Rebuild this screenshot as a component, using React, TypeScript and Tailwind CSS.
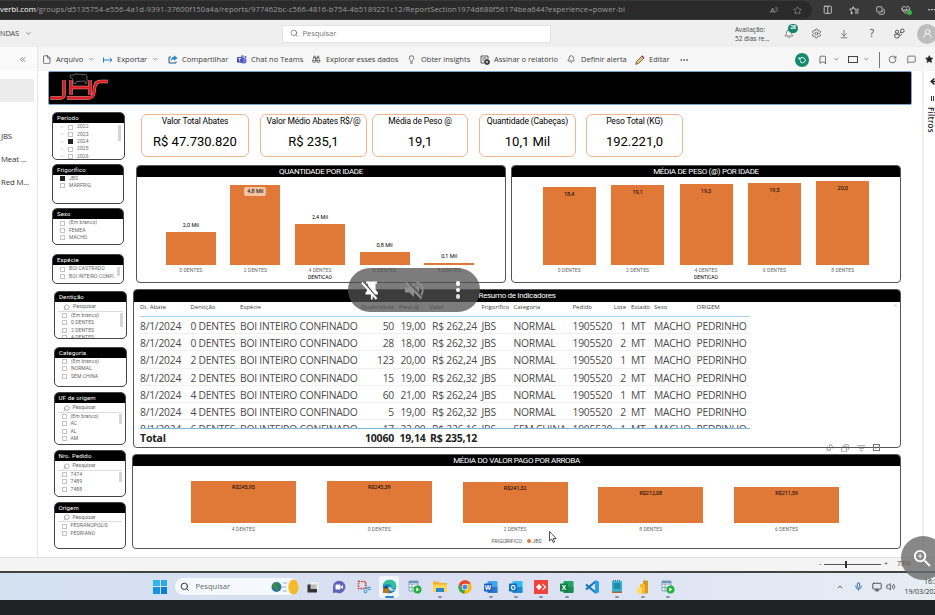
import type { ReactNode } from 'react'
import {
  ArrowDownToLine, Bell, Binoculars, Bookmark, Check, ChevronDown, ChevronUp, ChevronsLeft, Columns2, Copy, File,
  HeartPulse, Lightbulb, ListFilter, MessageSquare, Mic, Monitor, MoreHorizontal, Pin, RotateCw, Search, Settings,
  Star, UserRound, Volume2,
} from 'lucide-react'
import { MdZoomIn } from 'react-icons/md'

const din = "font-['Roboto',sans-serif]"
const segoe = "font-['Open_Sans',sans-serif]"

/* ---------- Browser and service bars ---------- */

function AddressBar() {
  return (
    <div className="flex h-[20px] shrink-0 items-center bg-[#383838]">
      <div className="flex h-[18px] w-[812px] shrink-0 items-center rounded-r-full bg-[#2a2a2a]">
        <span className="w-[761px] whitespace-nowrap text-[7.7px] tracking-[0.065px] text-[#9b9b9b]">
          <span className="text-white">verbi.com</span>
          /groups/d5135754-e556-4a1d-9391-37600f150a4a/reports/977462bc-c566-4816-b754-4b5189221c12/ReportSection1974d688f56174bea644?experience=power-bi
        </span>
        <span className="w-[32px] pl-[9px] text-[8px] leading-none text-[#a5a5a5]">A<sup className="text-[5px]">))</sup></span>
        <Star size={9} strokeWidth={1.6} color="#a5a5a5" />
      </div>
      <div className="flex items-center gap-[16.5px] pl-[11px] text-[#e0e0e0]">
        <Columns2 size={9.5} strokeWidth={2} />
        <svg width="10" height="9" viewBox="0 0 10 9" fill="none" stroke="#e0e0e0" strokeWidth="0.9">
          <path d="M4.2.8 5.2 3l2 .2M4.2.8 3.2 3 .7 3.3l1.8 1.8-.4 2.8 2-1.2M6 5h3.6M6 7h3.6M7.5 3.2h2.1" />
        </svg>
        <Copy size={9} strokeWidth={2} className="-scale-x-100 rotate-90" />
        <div className="relative">
          <HeartPulse size={9.5} strokeWidth={2} />
          <span className="absolute -right-[1px] bottom-0 size-[4.5px] rounded-full bg-[#35b54a]" />
        </div>
        <MoreHorizontal size={9.5} />
      </div>
    </div>
  )
}

function ServiceBar() {
  return (
    <div className="flex h-[27px] shrink-0 items-center bg-[#efefef] text-[#444]">
      <span className="w-[25px] shrink-0 text-[7.3px] tracking-[-0.1px]">NDAS</span>
      <ChevronDown size={7} strokeWidth={2} className="shrink-0" />
      <div className="ml-[250px] flex h-[18px] w-[269px] shrink-0 items-center border border-[#e2e2e2] bg-white pl-[7px]">
        <Search size={8.5} strokeWidth={1.7} className="text-[#555]" />
        <span className="pl-[4px] text-[7.6px] tracking-[-0.100px] text-[#777]">Pesquisar</span>
      </div>
      <div className="ml-[184px] w-[49px] shrink-0 text-[6.5px] leading-[9px]">
        <div>Avaliação:</div>
        <div>52 dias re...</div>
      </div>
      <div className="relative shrink-0">
        <Bell size={10} strokeWidth={1.6} />
        <span className="absolute -top-[5px] left-[4px] flex h-[9px] w-[10px] items-center justify-center rounded-full bg-[#12846b] text-[5px] font-bold text-white">28</span>
      </div>
      <Settings size={11} strokeWidth={1.5} className="ml-[17px] shrink-0" />
      <ArrowDownToLine size={10} strokeWidth={1.6} className="ml-[17px] shrink-0" />
      <span className="ml-[18px] w-[10px] shrink-0 text-center text-[10px]">?</span>
      <svg className="ml-[17px] shrink-0" width="11" height="11" viewBox="0 0 11 11" fill="none" stroke="#444" strokeWidth="0.9">
        <circle cx="3" cy="3.8" r="1.6" /><path d="M.6 6.3h4.6v1.5a2.3 2.3 0 0 1-4.6 0z" /><circle cx="8.3" cy="2.800" r="1.800" /><path d="M7 4 5.500 5.500M5.500 8 8 6" />
      </svg>
      <div className="ml-[12px] flex size-[20px] shrink-0 items-center justify-center rounded-full bg-[#bdbdbd]">
        <UserRound size={11} strokeWidth={1.8} color="#fff" />
      </div>
    </div>
  )
}

const chevron = <ChevronDown size={6.5} strokeWidth={2} />

function Action({ icon, label, width, menu }: { icon: ReactNode; label: string; width: string; menu?: boolean }) {
  return (
    <div className={'flex shrink-0 items-center ' + width}>
      <span className="flex w-[14px] shrink-0 items-center">{icon}</span>
      <span className="whitespace-nowrap">{label}</span>
      {menu && <span className="pl-[5px]">{chevron}</span>}
    </div>
  )
}

function Toolbar() {
  return (
    <div className="flex h-[24px] shrink-0 items-center bg-[#f6f6f6] pl-[4px] pt-px text-[7.5px] text-[#3c3c3c]">
      <Action width="w-[61px]" icon={<File size={9.5} strokeWidth={1.8} />} label="Arquivo" menu />
      <Action
        width="w-[65px]"
        icon={<svg width="10" height="8" viewBox="0 0 10 8" fill="none" stroke="#2f7fc4"><path d="M.5 1.5v5M1 4h8M6.8 2 9 4 6.8 6" /></svg>}
        label="Exportar"
        menu
      />
      <Action
        width="w-[69px]"
        icon={<svg width="10" height="9" viewBox="0 0 10 9"><path d="M3 2H1v6h7V6.500" fill="none" stroke="#245a86" /><path d="M6 .3 9.500 3 6 5.700V4.200Q4 4 2.500 6 3 2.200 6 2z" fill="#2787cf" /></svg>}
        label="Compartilhar"
      />
      <Action
        width="w-[75px]"
        icon={<svg width="10" height="9" viewBox="0 0 10 9"><circle cx="5.500" cy="1.500" r="1.500" fill="#7b83eb" /><circle cx="8.500" cy="2" r="1" fill="#5059c9" /><rect x="3.500" y="3" width="6" height="5.500" rx="2" fill="#6a72d8" /><rect y="2" width="5.500" height="5.500" rx=".5" fill="#4249ad" /><path d="M1.200 3.500h3M2.700 3.500v3" stroke="#fff" strokeWidth=".8" /></svg>}
        label="Chat no Teams"
      />
      <Action width="w-[95px] tracking-[-0.080px]" icon={<Binoculars size={8.5} strokeWidth={1.8} />} label="Explorar esses dados" />
      <Action width="w-[73px]" icon={<Lightbulb size={9} strokeWidth={1.9} />} label="Obter insights" />
      <Action
        width="w-[87px]"
        icon={<svg width="10" height="10" viewBox="0 0 10 10" fill="none" stroke="#333" strokeWidth=".8"><path d="M4 8H1V1h7v3M2.500 3h4M2.500 5h2" /><circle cx="7" cy="7" r="2.500" fill="#333" /><path d="M7 5.700v2.600M5.700 7h2.600" stroke="#fff" /></svg>}
        label="Assinar o relatório"
      />
      <Action width="w-[68px]" icon={<Bell size={8.5} strokeWidth={1.9} />} label="Definir alerta" />
      <Action
        width="w-[44px]"
        icon={<svg width="10" height="10" viewBox="0 0 10 10"><path d="M.7 9.300 1.500 6.500 7 1l2 2-5.500 5.500z" fill="#e5c46c" stroke="#5b5238" strokeWidth=".8" /><path d="m6.800.8 2.300 2.300" stroke="#7a3e72" strokeWidth="1.300" /></svg>}
        label="Editar"
      />
      <MoreHorizontal size={10} strokeWidth={1.7} className="shrink-0" />
      <div className="ml-[106px] flex size-[14px] shrink-0 items-center justify-center rounded-full bg-[#118a70]">
        <svg width="8" height="8" viewBox="0 0 8 8" fill="none" stroke="#fff" strokeWidth=".9"><path d="M1 1v2h2M1.200 3Q4-.2 6.500 2.500T4.500 7Q2.500 7 2.300 4.500" /></svg>
      </div>
      <Bookmark size={9.5} strokeWidth={1.8} className="ml-[9px] shrink-0" />
      <span className="ml-[5px]">{chevron}</span>
      <span className="ml-[9px] h-[7px] w-[10px] shrink-0 border border-[#444]" />
      <span className="ml-[5px]">{chevron}</span>
      <span className="ml-[9px] h-[16px] w-px shrink-0 bg-[#777]" />
      <RotateCw size={9} strokeWidth={1.8} className="ml-[8.5px] shrink-0" />
      <MessageSquare size={9} strokeWidth={1.8} className="ml-[9.500px] shrink-0" />
      <Star size={8.5} fill="#222" className="ml-[9.500px] shrink-0" />
    </div>
  )
}

function Sidebar() {
  return (
    <aside className="flex w-[38px] shrink-0 flex-col border-r border-[#e6e6e6] bg-white text-[7.8px] leading-[10px] text-[#333]">
      <div className="flex h-[24px] items-center justify-end bg-[#fafafa] pr-[10px]"><ChevronsLeft size={9} strokeWidth={1.7} /></div>
      <div className="mt-[8px] h-[23px] w-[34px] bg-[#ececec]" />
      <div className="mt-[29px] whitespace-nowrap pl-px tracking-[-0.200px]">JBS</div>
      <div className="mt-[13px] whitespace-nowrap pl-px tracking-[-0.150px]">Meat ...</div>
      <div className="mt-[13px] whitespace-nowrap pl-px tracking-[-0.150px]">Red M...</div>
    </aside>
  )
}

/* ---------- Report visuals ---------- */

const logoStrokes = 'M1.500 26H11.500q3.500 0 3.500-3.500V8M18 26h21q5 0 5.800-5l1-6.500q.8-5 5.700-5h7.500M22 8v15M41 8v15M22 15.500h19'

function Banner() {
  return (
    <div className="ml-[9.500px] h-[34px] w-[864.500px] shrink-0 rounded-[2px] border border-[#7fa3c4] bg-black">
      <svg width="64" height="32" viewBox="0 0 64 32" fill="none">
        <path d={logoStrokes} stroke="#d8a9a6" strokeWidth="3.300" />
        <path d={logoStrokes} stroke="#e01b22" strokeWidth="2.500" />
        <path d="M21.500 3h3l2-1 10 .5 1.500 1.500v5.500l-1 2.500-1.500-3-8 .5-1 2.500-2-.5-1-5-2.500-1z" fill="#070707" stroke="#93a3a3" strokeWidth=".6" />
      </svg>
    </div>
  )
}

type SlicerProps = {
  title: string
  place: string
  items: string[]
  search?: boolean
  tree?: boolean
  checked?: string
  thumb?: string
}

function Slicer({ title, place, items, search, tree, checked, thumb }: SlicerProps) {
  return (
    <section className={'shrink-0 overflow-hidden rounded-[5px] border border-[#444] bg-white text-[#666] ' + din + ' ' + place}>
      <h3 className="h-[10px] bg-black pl-[4px] text-[6px] leading-[9px] tracking-[0.150px] text-white">{title}</h3>
      {search && (
        <div className="mx-[3px] mb-[0.500px] flex h-[9.500px] items-center border-b border-[#ddd] pl-[5px] pt-[2px]">
          <Search size={7} strokeWidth={1.7} className="-scale-x-100" />
          <span className="pl-[3px] text-[5.300px] tracking-[-0.050px]">Pesquisar</span>
        </div>
      )}
      <div className={'flex justify-between pr-[3px] ' + (search ? '' : 'pt-[0.500px]')}>
        <ul>
          {items.map((item) => (
            <li key={item} className="flex h-[7.300px] items-center whitespace-nowrap pl-[7px] text-[5px] tracking-[0.080px]">
              {tree && <ChevronDown size={4} className="mr-[4px]" />}
              <span className={'mr-[4px] size-[5px] shrink-0 border ' + (item === checked ? 'border-[#222] bg-[#222]' : 'border-[#c4c4c4]')} />
              {item}
            </li>
          ))}
        </ul>
        {thumb && <span className={'mt-px w-[3.500px] shrink-0 bg-[#d5d5d5] ' + thumb} />}
      </div>
    </section>
  )
}

function SlicerColumn() {
  return (
    <div className="flex w-[94px] shrink-0 flex-col pl-[14px] pt-[7px]">
      <Slicer title="Período" place="h-[48px] w-[73px]" items={['2022', '2023', '2024', '2025', '2026']} tree checked="2024" thumb="h-[16px]" />
      <Slicer title="Frigorífico" place="mt-[3.500px] h-[40px] w-[72px]" items={['JBS', 'MARFRIG']} checked="JBS" />
      <Slicer title="Sexo" place="mt-[4.500px] h-[37px] w-[72px]" items={['(Em branco)', 'FEMEA', 'MACHO']} />
      <Slicer title="Espécie" place="mt-[9px] h-[30px] w-[72px]" items={['BOI CASTRADO', 'BOI INTEIRO CONFI..']} thumb="h-[9px]" />
      <Slicer title="Dentição" place="ml-[2px] mt-[7px] h-[48px] w-[73px]" items={['(Em branco)', '0 DENTES', '2 DENTES', '4 DENTES']} search thumb="h-[14px]" />
      <Slicer title="Categoria" place="ml-[2px] mt-[7.500px] h-[40.500px] w-[73px]" items={['(Em branco)', 'NORMAL', 'SEM CHINA']} />
      <Slicer title="UF de origem" place="ml-[1.500px] mt-[5px] h-[53px] w-[72.500px]" items={['(Em branco)', 'AC', 'AL', 'AM']} search thumb="h-[10px]" />
      <Slicer title="Nro. Pedido" place="ml-[1.500px] mt-[5px] h-[46.500px] w-[72.500px]" items={['7474', '7489', '7488']} search thumb="h-[10px]" />
      <Slicer title="Origem" place="ml-[1.500px] mt-[5px] h-[47.500px] w-[72px]" items={['PEDRANOPOLIS', 'PEDRIANO']} search />
    </div>
  )
}

function Kpi({ label, value, place }: { label: string; value: string; place: string }) {
  return (
    <div className={'h-[43px] shrink-0 rounded-[6px] border border-[#f0b78e] pt-px text-center text-black ' + din + ' ' + place}>
      <div className="whitespace-nowrap text-[8.500px] leading-[11px] tracking-[-0.150px]">{label}</div>
      <div className="pt-[7px] text-[13px] leading-[15px]">{value}</div>
    </div>
  )
}

function Panel({ title, place, children }: { title: string; place: string; children: ReactNode }) {
  return (
    <section className={'flex shrink-0 flex-col overflow-hidden rounded-[4px] border border-[#555] bg-white ' + din + ' ' + place}>
      <h2 className="h-[11.500px] shrink-0 bg-black text-center text-[8px] leading-[11.500px] tracking-[-0.320px] text-white">{title}</h2>
      {children}
    </section>
  )
}

type Bar = { name: string; value: string; height: string }

function BarRow({ bars, width, gap, inside, axis }: { bars: Bar[]; width: string; gap: string; inside: (bar: Bar) => string; axis: string }) {
  return (
    <div className={'flex items-end ' + gap}>
      {bars.map((bar) => {
        const style = inside(bar)
        return (
          <div key={bar.name} className={'flex shrink-0 flex-col items-center text-[5.500px] ' + width}>
            {!style && <span className="mb-[3px] leading-[7px] text-black">{bar.value}</span>}
            <div className={'flex w-full items-start justify-center bg-[#e07838] text-black ' + bar.height}>
              {style && <span className={'leading-[7px] ' + style}>{bar.value}</span>}
            </div>
            <span className={'text-[5px] leading-[7px] tracking-[0.080px] text-[#666] ' + axis}>{bar.name}</span>
          </div>
        )
      })}
    </div>
  )
}

const quantity: Bar[] = [
  { name: '0 DENTES', value: '2,0 Mil', height: 'h-[33px]' },
  { name: '2 DENTES', value: '4,8 Mil', height: 'h-[80px]' },
  { name: '4 DENTES', value: '2,4 Mil', height: 'h-[41px]' },
  { name: '6 DENTES', value: '0,8 Mil', height: 'h-[13px]' },
  { name: '8 DENTES', value: '0,1 Mil', height: 'h-[1.500px]' },
]
const weight: Bar[] = [
  { name: '0 DENTES', value: '18,4', height: 'h-[77.500px]' },
  { name: '2 DENTES', value: '19,1', height: 'h-[80px]' },
  { name: '4 DENTES', value: '19,3', height: 'h-[81px]' },
  { name: '6 DENTES', value: '19,5', height: 'h-[82px]' },
  { name: '8 DENTES', value: '20,0', height: 'h-[84px]' },
]
const paid: Bar[] = [
  { name: '4 DENTES', value: 'R$245,95', height: 'h-[42px]' },
  { name: '0 DENTES', value: 'R$245,39', height: 'h-[42px]' },
  { name: '2 DENTES', value: 'R$241,32', height: 'h-[41px]' },
  { name: '8 DENTES', value: 'R$212,08', height: 'h-[36px]' },
  { name: '6 DENTES', value: 'R$211,59', height: 'h-[36px]' },
]

const columns = [
  { label: 'Dt. Abate', cell: 'w-[50.500px]' },
  { label: 'Dentição', cell: 'w-[49.500px]' },
  { label: 'Espécie', cell: 'w-[122px]' },
  { label: 'Quantidade', cell: 'w-[32px] flex justify-end' },
  { label: 'Peso @', cell: 'w-[31.500px] flex justify-end' },
  { label: 'Valor', cell: 'w-[51.500px] flex justify-end' },
  { label: 'Frigorífico', cell: 'w-[36.500px] pl-[4.500px]' },
  { label: 'Categoria', cell: 'w-[59px]' },
  { label: 'Pedido', cell: 'w-[40px]' },
  { label: 'Lote', cell: 'w-[13.500px] flex justify-end' },
  { label: 'Estado', cell: 'w-[28px] pl-[5px]' },
  { label: 'Sexo', cell: 'w-[42.500px]' },
  { label: 'ORIGEM', cell: 'w-[53px]' },
]

const headings: Record<string, string> = {
  Quantidade: 'w-[32px] flex justify-end',
  'Peso @': 'w-[31.500px] flex justify-end pr-[6px]',
  Valor: 'w-[51.500px] pl-[4px]',
}

const records = [
  ['0 DENTES', '50', '19,00', 'R$ 262,24', 'NORMAL', '1'],
  ['0 DENTES', '28', '18,00', 'R$ 262,32', 'NORMAL', '2'],
  ['2 DENTES', '123', '20,00', 'R$ 262,24', 'NORMAL', '1'],
  ['2 DENTES', '15', '19,00', 'R$ 262,32', 'NORMAL', '2'],
  ['4 DENTES', '60', '21,00', 'R$ 262,24', 'NORMAL', '1'],
  ['4 DENTES', '5', '19,00', 'R$ 262,32', 'NORMAL', '2'],
  ['6 DENTES', '17', '22,00', 'R$ 226,16', 'SEM CHINA', '1'],
].map(([teeth, count, weightAt, price, category, lot]) => [
  '8/1/2024', teeth, 'BOI INTEIRO CONFINADO', count, weightAt, price, 'JBS', category, '1905520', lot, 'MT', 'MACHO', 'PEDRINHO',
])

function SummaryTable() {
  return (
    <div className={'flex grow flex-col pl-[6px] ' + segoe}>
      <div className="flex h-[15.500px] w-[610px] shrink-0 items-center border-b border-[#9fd3ec] pb-[2px] text-[6px] text-[#444]">
        {columns.map(({ label, cell }) => (
          <span key={label} className={'shrink-0 whitespace-nowrap ' + (headings[label] ?? cell)}>{label}</span>
        ))}
      </div>
      <div className="h-[112px] w-[610px] shrink-0 overflow-hidden border-b border-[#79b7dc]">
        {records.map((record, row) => (
          <div key={row} className="flex h-[17.200px] items-center border-b border-[#f0f0f0] pt-[2px] text-[10.300px] leading-[14px] tracking-[-0.230px] text-[#4a4a4a]">
            {record.map((value, index) => (
              <span key={columns[index].label} className={'shrink-0 whitespace-nowrap ' + columns[index].cell}>{value}</span>
            ))}
          </div>
        ))}
      </div>
      <div className="flex h-[17px] shrink-0 items-center pt-px text-[10.500px] font-bold leading-[14px] tracking-[-0.200px] text-[#222]">
        <span className="w-[222px]">Total</span>
        <span className="flex w-[32px] justify-end">10060</span>
        <span className="flex w-[31.500px] justify-end">19,14</span>
        <span className="flex w-[51.500px] justify-end whitespace-nowrap">R$ 235,12</span>
      </div>
    </div>
  )
}

function Report() {
  return (
    <div className="flex grow">
      <SlicerColumn />
      <div className="flex w-[790px] shrink-0 flex-col">
        <div className="flex pl-[9px] pt-[8.500px]">
          <Kpi place="w-[108px]" label="Valor Total Abates" value="R$ 47.730.820" />
          <Kpi place="ml-[11px] w-[107px]" label="Valor Médio Abates R$/@" value="R$ 235,1" />
          <Kpi place="ml-[5px] w-[96px]" label="Média de Peso @" value="19,1" />
          <Kpi place="ml-[11px] w-[97px]" label="Quantidade (Cabeças)" value="10,1 Mil" />
          <Kpi place="ml-[10px] w-[97px]" label="Peso Total (KG)" value="192.221,0" />
        </div>
        <div className="flex gap-[5px] pl-[4px] pt-[8px]">
          <Panel title="QUANTIDADE POR IDADE" place="h-[118.500px] w-[370px]">
            <div className="flex grow flex-col items-center justify-end pb-[1.500px] pr-[2px]">
              <BarRow bars={quantity} width="w-[50px]" gap="gap-[14.600px]" axis="pt-[2px]" inside={(bar) => (bar.name === '2 DENTES' ? 'mt-[2.500px] rounded-[2px] bg-[#f2c5a4] px-[3px] py-px' : '')} />
              <span className="text-[5px] leading-[7px] text-black">DENTICAO</span>
            </div>
          </Panel>
          <Panel title="MÉDIA DE PESO (@) POR IDADE" place="h-[118.500px] w-[390px]">
            <div className="flex grow flex-col items-center justify-end pb-[1.500px]">
              <BarRow bars={weight} width="w-[53px]" gap="gap-[15.400px]" axis="pt-[2px]" inside={() => 'mt-[4px]'} />
              <span className="text-[5px] leading-[7px] text-black">DENTICAO</span>
            </div>
          </Panel>
        </div>
        <Panel title="Resumo de Indicadores" place="ml-[1px] mt-[6px] h-[159px] w-[768px]">
          <div className="flex grow">
            <SummaryTable />
            <ChevronUp size={5} className="mr-[2px] mt-px" color="#666" />
          </div>
        </Panel>
        <Panel title="MÉDIA DO VALOR PAGO POR ARROBA" place="mt-[5.500px] h-[95.500px] w-[769px]">
          <div className="flex grow flex-col items-center justify-end pb-[3px] pr-[3px]">
            <BarRow bars={paid} width="w-[105px]" gap="gap-[30.800px]" axis="pt-[3px]" inside={() => 'mt-[3px] tracking-[-0.050px]'} />
            <div className="flex items-center pl-[3px] pt-[4px] text-[5.200px] leading-[8px] text-[#555]">
              <span>FRIGORIFICO</span>
              <span className="ml-[5px] size-[4.500px] rounded-full bg-[#e07838]" />
              <span className="ml-[1px]">JBS</span>
            </div>
          </div>
        </Panel>
      </div>
    </div>
  )
}

function FilterRail() {
  return (
    <aside className="flex w-[13px] shrink-0 flex-col items-end border-l-2 border-[#f0f0f0] bg-white pt-[7px] text-[#222]">
      <svg width="5" height="7" viewBox="0 0 5 7"><path d="M4.500.5 1 3.500l3.500 3M2 3.500h3" stroke="#222" fill="none" strokeWidth="1.400" /></svg>
      <svg className="mt-[11px]" width="4" height="5" viewBox="0 0 4 5" fill="#333"><path d="M0 0h1v5H0zM2 0h1v5H2z" /></svg>
      <span className="mt-[6px] text-[8px] font-semibold leading-[8px] tracking-[0.250px] [writing-mode:vertical-rl]">Filtros</span>
    </aside>
  )
}

/* ---------- Desktop taskbar ---------- */

function GridPlay() {
  return (
    <svg width="14" height="14" viewBox="0 0 14 14">
      <path d="M1 1h9v10H1zM1 4h9M1 7.500h9M4 4v7" fill="#eef5fb" stroke="#8aa4bb" />
      <path d="M1 1h9v2H1z" fill="#6995bd" /><circle cx="9.500" cy="9.500" r="4" fill="#20b33a" /><path d="m8.300 7.500 3.200 2-3.200 2z" fill="#fff" />
    </svg>
  )
}

function OfficeTile({ letter, back, front }: { letter: string; back: string; front: string }) {
  return (
    <svg width="14" height="14" viewBox="0 0 14 14">
      <rect x="3.500" y="1" width="10" height="12" rx="1" fill={back} /><path d="M3.500 7h10v5q0 1-1 1h-9z" fill={front} opacity=".6" />
      <rect y="3.500" width="8" height="8" rx="1" fill={front} />
      <text x="4" y="9.800" fontSize="6.500" fontWeight="bold" textAnchor="middle" fill="#fff">{letter}</text>
    </svg>
  )
}

const apps: { name: string; active?: boolean; running?: boolean; icon: ReactNode }[] = [
  { name: 'views', icon: <svg width="14" height="14" viewBox="0 0 14 14"><rect x="4" y="2" width="9" height="8" fill="#eee" /><path d="M1.500 4.500H5V9h6v3.500H1.500z" fill="#333" /><rect x="4.500" y="4.500" width="6" height="4.500" fill="#bbb" /></svg> },
  { name: 'chat', icon: <svg width="14" height="14" viewBox="0 0 14 14"><path d="M7 .7a6.300 6.300 0 1 1-3 11.800L1 13V7A6.200 6.200 0 0 1 7 .7" fill="#6264b8" /><rect x="3.500" y="4.500" width="5" height="5" rx="1" fill="#fff" /><path d="m9 6.500 2-1.500v4L9 7.700z" fill="#fff" /></svg> },
  { name: 'snip', icon: <svg width="14" height="14" viewBox="0 0 14 14" fill="none"><path d="M1.500 1.500h7v7h-7z" stroke="#d8392b" strokeWidth="1.500" strokeDasharray="1.500 1" /><path d="m9 3 .3 6M5 9l6-1" stroke="#999" strokeWidth="1.200" /><circle cx="8.500" cy="11.500" r="1.400" stroke="#2196d3" /><circle cx="12" cy="8.500" r="1.400" stroke="#2196d3" /></svg> },
  { name: 'edge', active: true, icon: <svg width="15" height="15" viewBox="0 0 15 15"><circle cx="7.500" cy="7.500" r="6.800" fill="#1687cf" /><path d="M1 7Q2 .7 8 .7q6 .3 6.300 6-.5 3.500-5 3 1.200-2-.8-3.700Q5 3.500 1 7" fill="#35bf9b" /><path d="M5 7q-1.500 6 5 6.500-6 2.200-8.500-2Q1 7.500 5 7" fill="#0c59a4" /><path d="M6.500 8q-1 4 4 3.800l3-1.500-3.500.2q-1.500-.5-.5-2z" fill="#e8f4fb" /><path d="M1 9.500h6.500v4.500H1z" fill="#b7791f" /><path d="M3 9V8h2.500v1" stroke="#53330b" fill="none" /></svg> },
  { name: 'sheet', icon: <GridPlay /> },
  { name: 'files', running: true, icon: <svg width="14" height="14" viewBox="0 0 14 14"><path d="M0 1.500h5l1.500 1.500H14V12H0z" fill="#eeb22d" /><path d="M0 4.500h14V12H0z" fill="#ffd457" /><path d="M3 8h8v4H3z" fill="#278bd0" /></svg> },
  { name: 'chrome', icon: <svg width="14" height="14" viewBox="0 0 14 14"><circle cx="7" cy="7" r="6.700" fill="#fbbc05" /><path d="M1.200 3.700A6.700 6.700 0 0 1 12.800 3.700H7L4.200 8.700z" fill="#ea4335" /><path d="M1.200 3.700 4.200 8.700 7 10.300l-.7 3.400A6.700 6.700 0 0 1 1.200 3.700" fill="#34a853" /><circle cx="7" cy="7" r="3.200" fill="#fff" /><circle cx="7" cy="7" r="2.500" fill="#4285f4" /></svg> },
  { name: 'word', running: true, icon: <OfficeTile letter="W" back="#41a5ee" front="#185abd" /> },
  { name: 'outlook', running: true, icon: <OfficeTile letter="O" back="#35b8f1" front="#0f6cbd" /> },
  { name: 'anydesk', running: true, icon: <svg width="14" height="14" viewBox="0 0 14 14"><rect width="14" height="14" fill="#ef443b" /><path d="m5 4 3 3-3 3-3-3z" fill="#fff" /><path d="m8 4 1-.2L12.300 7 9 10.200 8 10l2.500-3z" fill="#fff" /></svg> },
  { name: 'excel', running: true, icon: <OfficeTile letter="X" back="#21a366" front="#107c41" /> },
  { name: 'code', icon: <svg width="14" height="14" viewBox="0 0 14 14" fill="none"><path d="m1 4.500 9.500 8M1 9.500l9.500-8" stroke="#1976b9" strokeWidth="2.200" /><path d="m10 0 4 1.800v10.400L10 14z" fill="#29a0e5" /></svg> },
  { name: 'notes', running: true, icon: <svg width="12" height="14" viewBox="0 0 12 14"><rect x="1" y="1" width="10" height="12" fill="#36b6d4" /><path d="M2.500 4h7M2.500 6h7M2.500 8h7" stroke="#11617b" /><path d="M2 .5h8" stroke="#456" strokeDasharray="1 1" /><path d="M1 11.500h10V13H1z" fill="#a5693b" /></svg> },
  { name: 'powerbi', running: true, icon: <svg width="13" height="14" viewBox="0 0 13 14"><rect x="7" y=".5" width="5" height="13" rx="1" fill="#d99a18" /><rect x="4" y="4" width="5" height="9.500" rx="1" fill="#f1bd2c" /><rect x="1" y="7.500" width="5" height="6" rx="1" fill="#ffdb62" /></svg> },
  { name: 'sheet2', running: true, icon: <GridPlay /> },
]

function Taskbar() {
  return (
    <div className="flex h-[27px] shrink-0 items-center bg-linear-to-r from-[#d3e1f1] via-[#dadff2] to-[#e6eef4]">
      <div className="ml-[153px] grid size-[14px] shrink-0 grid-cols-2 gap-px">
        <span className="bg-[#37b3ee]" /><span className="bg-[#2ba8ea]" /><span className="bg-[#1993df]" /><span className="bg-[#0d7fd1]" />
      </div>
      <div className="ml-[8px] flex h-[17px] w-[124px] shrink-0 items-center rounded-full bg-[#f5f8fc] pl-[5px]">
        <Search size={9.5} strokeWidth={2.3} color="#222" className="shrink-0" />
        <span className="w-[81px] shrink-0 pl-[6px] text-[7.600px] text-[#666]">Pesquisar</span>
        <svg className="shrink-0" width="28" height="16" viewBox="0 0 28 16">
          <circle cx="5.500" cy="8" r="5" fill="#2a6fa5" /><path d="M2 5q3-3 5-1L6 7l2 3-3 2-1-3-3-1zM8 5l2 1v3z" fill="#3e8e3c" />
          <path d="M12 4h4M11 8h4M12 12h4" stroke="#9aabc6" /><ellipse cx="22.500" cy="8" rx="5.200" ry="7.500" fill="#f4b92c" />
        </svg>
      </div>
      <div className="ml-[1.500px] flex shrink-0">
        {apps.map((app) => (
          <div key={app.name} className="flex w-[25.360px] shrink-0 justify-center">
            <div className={'relative flex h-[22px] w-[20px] items-center justify-center rounded-[3px] ' + (app.active ? 'bg-[#f1f5fc]' : '')}>
              {app.icon}
              {(app.active || app.running) && (
                <span className={'absolute rounded-full ' + (app.active ? 'bottom-0 h-[2px] w-[9px] bg-[#2587ce]' : 'bottom-0 h-[2px] w-[4px] bg-[#8b929d]')} />
              )}
            </div>
          </div>
        ))}
      </div>
      <ChevronUp size={8} strokeWidth={2.2} className="ml-[155.500px] shrink-0" color="#333" />
      <Mic size={9} strokeWidth={2.2} className="ml-[10px] shrink-0" color="#255ba9" />
      <Monitor size={10} strokeWidth={2} className="ml-[9px] shrink-0" color="#333" />
      <Volume2 size={9.5} strokeWidth={1.9} className="ml-[4px] shrink-0" color="#333" />
      <div className="ml-[8.500px] w-[35px] shrink-0 whitespace-nowrap text-[7px] leading-[9.500px] text-[#333]">
        <div className="pl-[19.500px]">16:32</div>
        <div>19/03/2024</div>
      </div>
    </div>
  )
}

/* ---------- Floating layers ---------- */

function CallControls() {
  return (
    <div className="absolute left-[348px] top-[268px] flex h-[44px] w-[132px] items-center justify-center gap-[22px] rounded-full bg-[#505050]/75 text-white">
      <svg width="22" height="22" viewBox="0 0 22 22"><path d="M7 2.500h11v2h-1.500v6l2.500 3v2h-5.300V20l-.9 1-.9-1v-4.500H6.500v-2L9 10.500v-6H7z" fill="#fff" /><path d="m4.500 2.500 14 17" stroke="#555" strokeWidth="1.600" /><path d="m3 3.500 14.500 16.500" stroke="#fff" strokeWidth="1.900" /></svg>
      <svg width="22" height="22" viewBox="0 0 22 22" fill="none" stroke="#909090" strokeWidth="1.800"><path d="M2 8.500h4.500L11 4v14l-4.500-4.500H2z" fill="#909090" stroke="none" /><path d="M13.500 7.500q3.500 3.500 0 7M13.500 3q9.500 4 4.500 14" /><path d="m4.500 2.500 15 15.500" stroke="#585858" strokeWidth="1.500" /><path d="m3 3.500 15.500 16" /></svg>
      <div className="flex w-[22px] flex-col items-center gap-[2px]">
        <span className="size-[4.500px] rounded-full bg-white" /><span className="size-[4.500px] rounded-full bg-white" /><span className="size-[4.500px] rounded-full bg-[#ddd]" />
      </div>
    </div>
  )
}

export default function App() {
  return (
    <div className={'relative flex h-[615px] w-[935px] flex-col overflow-hidden bg-white ' + segoe}>
      <AddressBar />
      <ServiceBar />
      <div className="flex h-[510px] shrink-0">
        <Sidebar />
        <main className="flex w-[897px] flex-col">
          <Toolbar />
          <div className="flex grow">
            <div className="flex w-[884px] shrink-0 flex-col">
              <Banner />
              <Report />
            </div>
            <FilterRail />
          </div>
        </main>
      </div>
      <div className="flex h-[14px] shrink-0 items-center border-t border-[#e2e2e2] bg-[#f4f4f4] pl-[819px] text-[7px] text-[#444]">
        <span className="w-[5px]">-</span>
        <span className="h-px w-[21px] bg-[#555]" /><span className="h-[7px] w-[2px] bg-[#333]" /><span className="h-px w-[34px] bg-[#555]" />
        <span className="w-[16px] pl-[3px]">+</span>
        <span>78%</span>
      </div>
      <div className="h-[2px] shrink-0 bg-[#404542]" />
      <Taskbar />
      <div className="h-[15px] shrink-0 bg-[#202124]" />

      <div className="absolute left-[825px] top-[443.500px] flex gap-[7.500px] text-[#555]">
        <Pin size={8.5} strokeWidth={1.6} className="rotate-45" />
        <Copy size={8.5} strokeWidth={1.6} className="-scale-x-100" />
        <ListFilter size={8.5} strokeWidth={1.6} />
        <span className="flex size-[7px] items-center justify-center border border-[#777]"><Check size={5} /></span>
      </div>
      <CallControls />
      <svg className="absolute left-[549px] top-[531px]" width="8" height="12" viewBox="0 0 8 12"><path d="M.5.5v9.500l2.200-2 1.500 3.500 1.500-.7-1.500-3.300h3z" fill="#fff" stroke="#222" strokeWidth=".8" /></svg>
      <div className="absolute left-[901px] top-[536px] flex size-[44px] items-center justify-center rounded-full bg-[#6a6a6a]/80">
        <MdZoomIn size={23} color="#fff" className="-translate-x-px" />
      </div>
    </div>
  )
}
